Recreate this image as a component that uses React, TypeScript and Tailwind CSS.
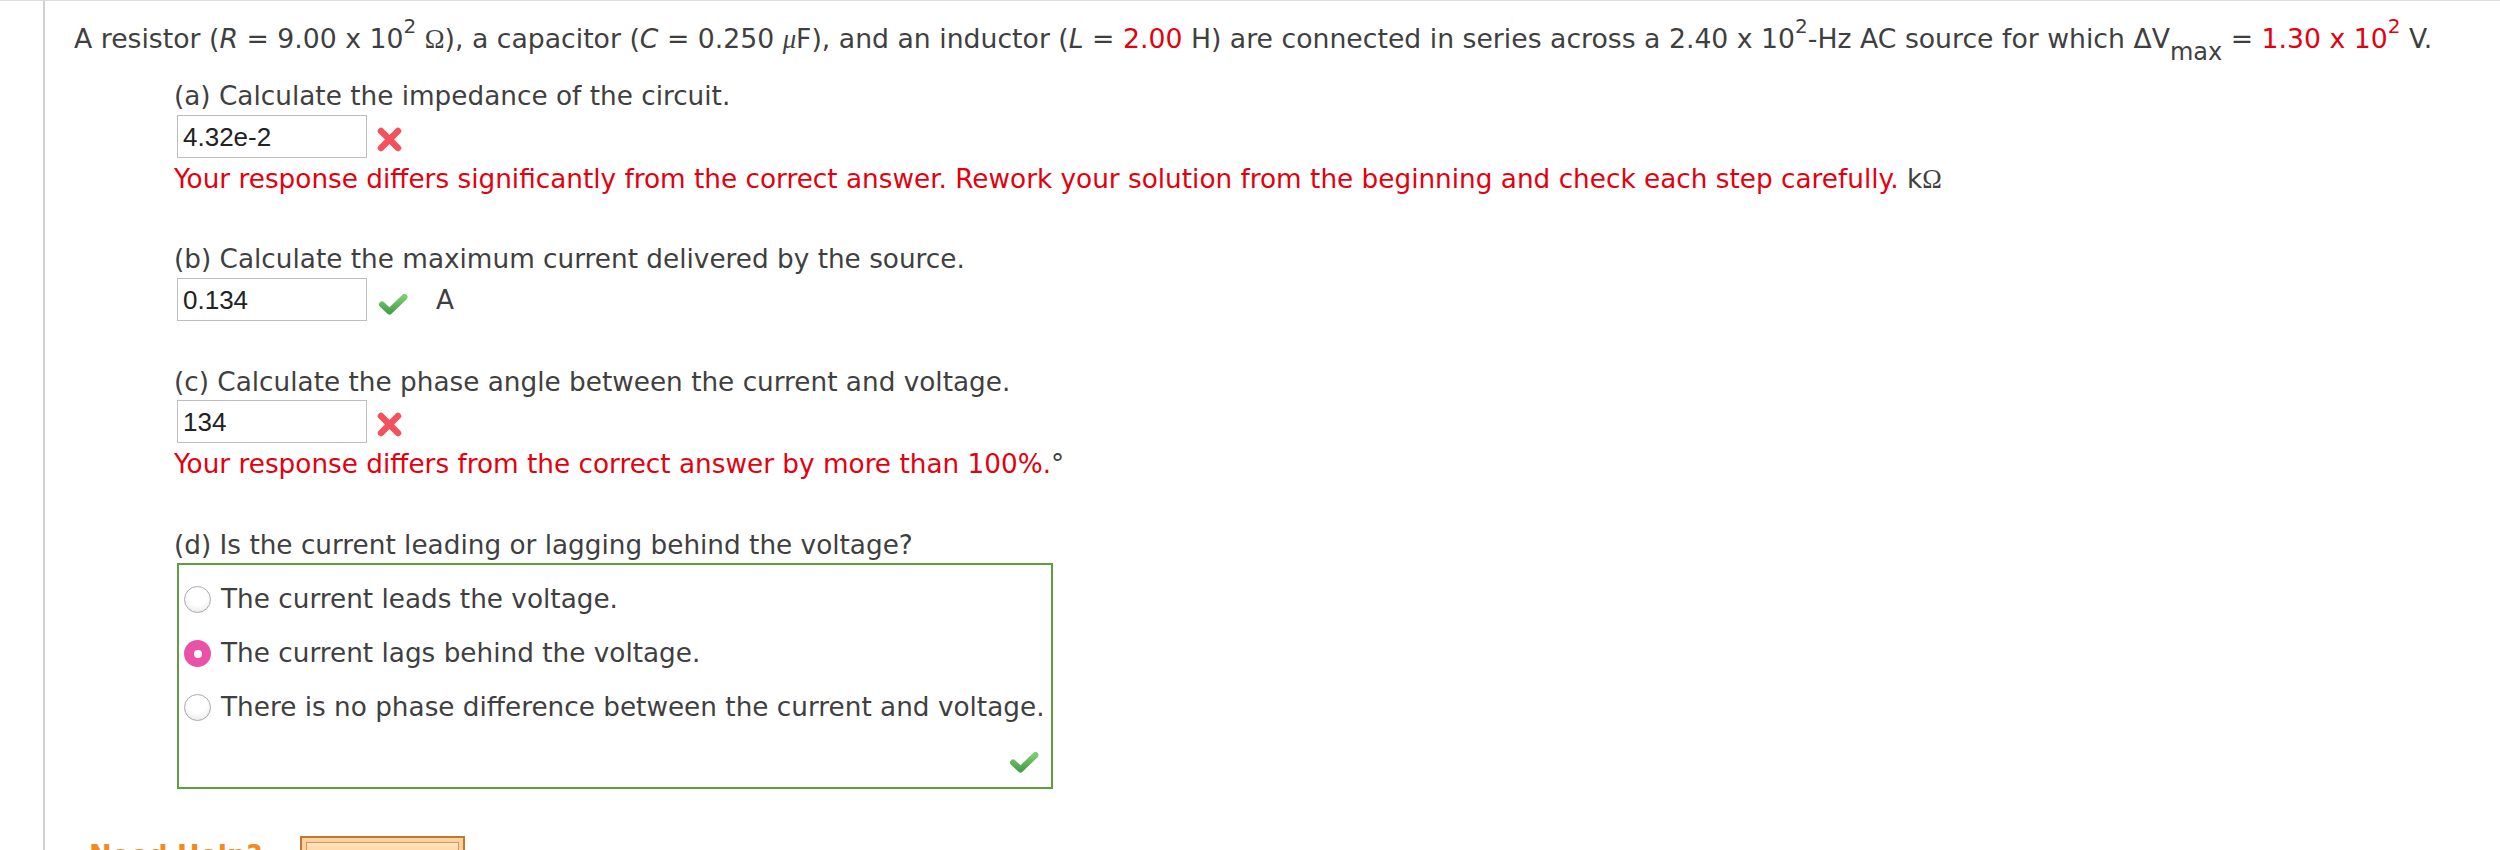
import React from 'react';

const RED = 'text-[#e3000f]';

const WrongIcon = () => (
  <svg width="28" height="27" viewBox="0 0 28 27" className="block shrink-0">
    <defs>
      <filter id="soft" x="-20%" y="-20%" width="140%" height="140%">
        <feGaussianBlur stdDeviation="0.7" />
      </filter>
    </defs>
    <g filter="url(#soft)" stroke="#f4515b" strokeWidth="6.5" strokeLinecap="round">
      <line x1="5" y1="5" x2="22" y2="22" />
      <line x1="22" y1="5" x2="5" y2="22" />
    </g>
  </svg>
);

const RightIcon = () => (
  <svg width="32" height="24" viewBox="0 0 32 24" className="block shrink-0">
    <defs>
      <linearGradient id="chk" x1="0" y1="0" x2="0" y2="1">
        <stop offset="0" stopColor="#7ccb74" />
        <stop offset="1" stopColor="#4aa24a" />
      </linearGradient>
      <filter id="soft2" x="-20%" y="-20%" width="140%" height="140%">
        <feGaussianBlur stdDeviation="0.6" />
      </filter>
    </defs>
    <polyline
      points="5,12.5 12.5,19.5 27.5,5"
      fill="none"
      stroke="url(#chk)"
      strokeWidth="6"
      strokeLinecap="round"
      strokeLinejoin="round"
      filter="url(#soft2)"
    />
  </svg>
);

const AnswerBox = ({ value }: { value: string }) => (
  <div className="ml-[3px] w-[190px] h-[43px] border border-[#bdbdbd] bg-white flex items-center pl-[5px] font-['Liberation_Sans',Arial,sans-serif] text-[26px] text-[#222]">
    {value}
  </div>
);

const Radio = ({ checked }: { checked?: boolean }) =>
  checked ? (
    <span className="relative top-[2px] w-[27px] h-[27px] rounded-full bg-[#ea52a8] flex items-center justify-center shrink-0">
      <span className="block w-[8px] h-[8px] rounded-full bg-white" />
    </span>
  ) : (
    <span className="relative top-[2px] block w-[27px] h-[27px] rounded-full border border-[#a9a9a9] bg-[radial-gradient(circle_at_50%_35%,#ffffff_45%,#e2e2e2_100%)] shrink-0" />
  );

const Omega = () => <span className="font-['Liberation_Serif',serif]">Ω</span>;

const Sup = ({ children }: { children: React.ReactNode }) => (
  <span className="relative -top-[15px] text-[20px] leading-none">{children}</span>
);

export default function App() {
  const options = [
    { text: 'The current leads the voltage.', checked: false },
    { text: 'The current lags behind the voltage.', checked: true },
    { text: 'There is no phase difference between the current and voltage.', checked: false },
  ];

  return (
    <div className="h-[850px] w-full bg-white border-t border-[#dedede] overflow-hidden flex font-['DejaVu_Sans',Verdana,sans-serif] text-[26.3px] leading-[30px] text-[#3f3f3f]">
      <div className="w-[43px] shrink-0" />
      <div className="flex-1 border-l-2 border-[#d0d0d0] pl-[29px] pt-[23px]">
        {/* Problem statement */}
        <p className="whitespace-nowrap text-[26.7px]">
          A resistor (<i>R</i> = 9.00 x 10<Sup>2</Sup> <Omega />), a capacitor (<i>C</i> = 0.250{' '}
          <i className="font-['Liberation_Serif',serif]">μ</i>F), and an inductor (<i>L</i> ={' '}
          <span className={RED}>2.00</span> H) are connected in series across a 2.40 x 10
          <Sup>2</Sup>-Hz AC source for which ΔV
          <span className="relative top-[12px] text-[24px] leading-none">max</span> ={' '}
          <span className={RED}>
            1.30 x 10<Sup>2</Sup>
          </span>{' '}
          V.
        </p>

        <div className="ml-[100px]">
          {/* (a) */}
          <p className="mt-[27px]">(a) Calculate the impedance of the circuit.</p>
          <div className="mt-[4px] flex items-center gap-[9px]">
            <AnswerBox value="4.32e-2" />
            <span className="mt-[5px]">
              <WrongIcon />
            </span>
          </div>
          <p className="mt-[6px] whitespace-nowrap">
            <span className={RED}>
              Your response differs significantly from the correct answer. Rework your solution from the beginning and
              check each step carefully.
            </span>{' '}
            k<Omega />
          </p>

          {/* (b) */}
          <p className="mt-[49px]">(b) Calculate the maximum current delivered by the source.</p>
          <div className="mt-[4px] flex items-center">
            <AnswerBox value="0.134" />
            <span className="ml-[10px] mt-[8px]">
              <RightIcon />
            </span>
            <span className="ml-[27px]">A</span>
          </div>

          {/* (c) */}
          <p className="mt-[46px]">(c) Calculate the phase angle between the current and voltage.</p>
          <div className="mt-[3px] flex items-center gap-[9px]">
            <AnswerBox value="134" />
            <span className="mt-[6px]">
              <WrongIcon />
            </span>
          </div>
          <p className="mt-[6px]">
            <span className={RED}>Your response differs from the correct answer by more than 100%.</span>°
          </p>

          {/* (d) */}
          <p className="mt-[51px]">(d) Is the current leading or lagging behind the voltage?</p>
          <div className="mt-[3px] ml-[3px] w-[876px] h-[226px] border-2 border-[#5e9f40] pl-[5px] pt-[19px] pr-[11px] flex flex-col">
            <div className="flex flex-col gap-[24px]">
              {options.map((o) => (
                <label key={o.text} className="flex items-start gap-[10px] whitespace-nowrap">
                  <Radio checked={o.checked} />
                  <span>{o.text}</span>
                </label>
              ))}
            </div>
            <div className="mt-auto mb-[13px] flex justify-end">
              <RightIcon />
            </div>
          </div>
        </div>

        {/* Need help */}
        <div className="mt-[47px] ml-[15px] flex items-start gap-[38px]">
          <span className="font-bold text-[27px] leading-[26px] pt-[6px] text-[#f28a1e]">Need Help?</span>
          <span className="w-[165px] h-[40px] border-2 border-[#c0773a] bg-[#ffd29a] p-[4px]">
            <span className="block w-full h-full border border-[#c9996a] bg-[linear-gradient(#ffe2bc,#ffc67e)]" />
          </span>
        </div>
      </div>
    </div>
  );
}
